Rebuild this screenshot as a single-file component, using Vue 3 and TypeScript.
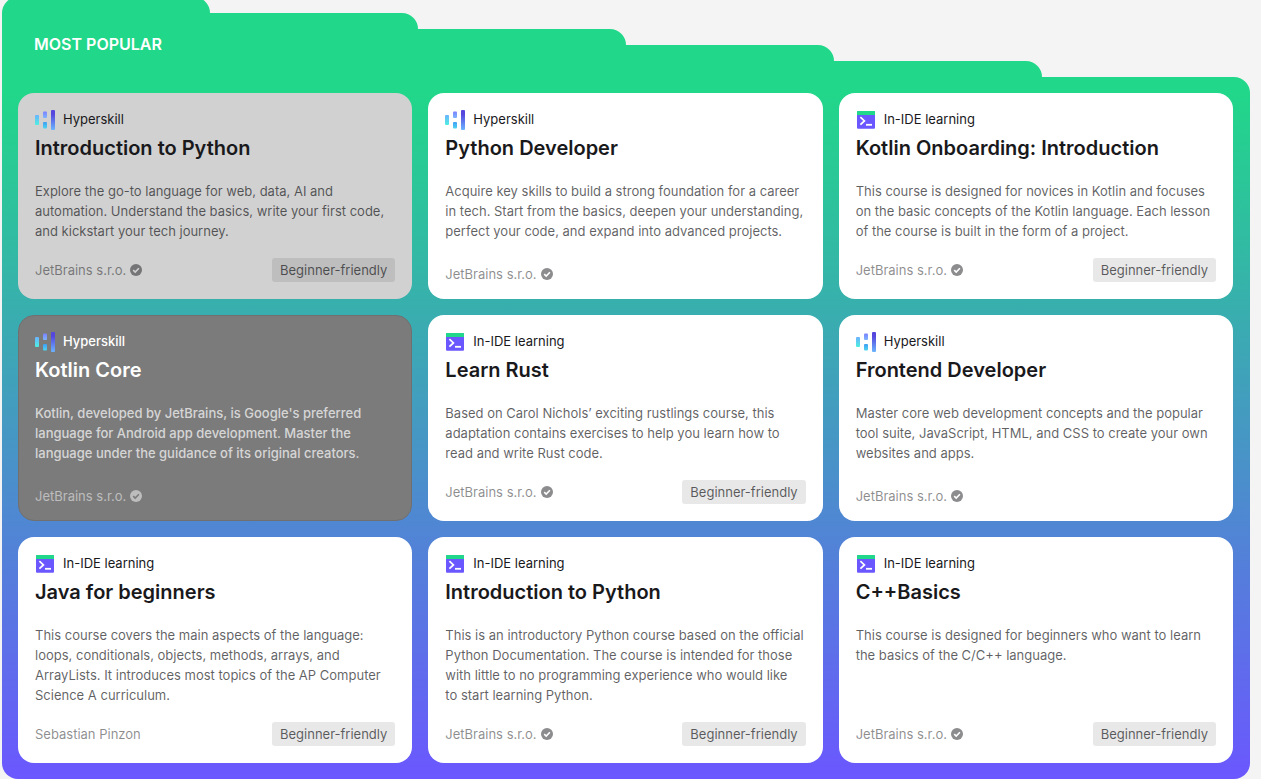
<script setup lang="ts">
type Provider = 'hyperskill' | 'ide'
type Tone = 'default' | 'hovered' | 'dark'

interface Course {
  provider: Provider
  title: string
  text: string
  author: string
  verified: boolean
  beginner: boolean
  tone: Tone
}

const providerNames: Record<Provider, string> = {
  hyperskill: 'Hyperskill',
  ide: 'In-IDE learning',
}

function course(
  provider: Provider,
  title: string,
  text: string,
  beginner: boolean,
  tone: Tone = 'default',
  author = 'JetBrains s.r.o.',
  verified = true,
): Course {
  return { provider, title, text, author, verified, beginner, tone }
}

const courses: Course[] = [
  course('hyperskill', 'Introduction to Python', 'Explore the go-to language for web, data, AI and\nautomation. Understand the basics, write your first code,\nand kickstart your tech journey.', true, 'hovered'),
  course('hyperskill', 'Python Developer', 'Acquire key skills to build a strong foundation for a career\nin tech. Start from the basics, deepen your understanding,\nperfect your code, and expand into advanced projects.', false),
  course('ide', 'Kotlin Onboarding: Introduction', 'This course is designed for novices in Kotlin and focuses\non the basic concepts of the Kotlin language. Each lesson\nof the course is built in the form of a project.', true),
  course('hyperskill', 'Kotlin Core', "Kotlin, developed by JetBrains, is Google's preferred\nlanguage for Android app development. Master the\nlanguage under the guidance of its original creators.", false, 'dark'),
  course('ide', 'Learn Rust', 'Based on Carol Nichols’ exciting rustlings course, this\nadaptation contains exercises to help you learn how to\nread and write Rust code.', true),
  course('hyperskill', 'Frontend Developer', 'Master core web development concepts and the popular\ntool suite, JavaScript, HTML, and CSS to create your own\nwebsites and apps.', false),
  course('ide', 'Java for beginners', 'This course covers the main aspects of the language:\nloops, conditionals, objects, methods, arrays, and\nArrayLists. It introduces most topics of the AP Computer\nScience A curriculum.', true, 'default', 'Sebastian Pinzon', false),
  course('ide', 'Introduction to Python', 'This is an introductory Python course based on the official\nPython Documentation. The course is intended for those\nwith little to no programming experience who would like\nto start learning Python.', true),
  course('ide', 'C++Basics', 'This course is designed for beginners who want to learn\nthe basics of the C/C++ language.', true),
]
</script>

<template>
  <svg class="defs" width="0" height="0" aria-hidden="true">
    <defs>
      <linearGradient id="bar-cyan" x1="0" y1="0" x2="0" y2="1">
        <stop offset="0" stop-color="#6bb2ff" />
        <stop offset="1" stop-color="#4df0e0" />
      </linearGradient>
      <linearGradient id="bar-periwinkle" x1="0" y1="0" x2="0" y2="1">
        <stop offset="0" stop-color="#7b82ff" />
        <stop offset="1" stop-color="#7db4ff" />
      </linearGradient>
      <linearGradient id="bar-sky" x1="0" y1="0" x2="0" y2="1">
        <stop offset="0" stop-color="#3f9df5" />
        <stop offset="1" stop-color="#4fd6f0" />
      </linearGradient>
      <linearGradient id="bar-indigo" x1="0" y1="0" x2="0" y2="1">
        <stop offset="0.2" stop-color="#5546dd" />
        <stop offset="1" stop-color="#6bb4ff" />
      </linearGradient>
    </defs>
  </svg>
  <section class="folder" aria-labelledby="folder-title">
    <header class="steps">
      <span v-for="n in 6" :key="n" class="step" />
      <h2 id="folder-title" class="folder-title">MOST POPULAR</h2>
    </header>
    <div class="cards">
      <a v-for="(c, i) in courses" :key="i" href="#" class="card" :class="c.tone">
        <div class="provider">
          <svg v-if="c.provider === 'hyperskill'" class="logo" viewBox="0 0 20 20" aria-hidden="true">
            <rect x="0" y="5" width="4" height="10" rx="1" fill="url(#bar-cyan)" />
            <rect x="8" y="1.5" width="4" height="6.5" rx="1" fill="url(#bar-periwinkle)" />
            <rect x="8" y="12" width="4" height="6.5" rx="1" fill="url(#bar-sky)" />
            <rect x="16" y="0" width="4" height="20" rx="1" fill="url(#bar-indigo)" />
          </svg>
          <svg v-else class="logo" viewBox="0 0 20 20" aria-hidden="true">
            <rect x="1" y="1" width="18" height="17.7" rx="1" fill="#6b57ff" />
            <path d="M2 1h16a1 1 0 0 1 1 1v2.9H1V2a1 1 0 0 1 1-1z" fill="#21d789" />
            <path d="M4.4 7.2 8.4 10.9 4.4 14.6" fill="none" stroke="#fff" stroke-width="1.7" />
            <path d="M10 14.8h6" stroke="#fff" stroke-width="1.8" />
          </svg>
          <span>{{ providerNames[c.provider] }}</span>
        </div>
        <h3 class="title">{{ c.title }}</h3>
        <p class="text">{{ c.text }}</p>
        <div class="footer">
          <span class="author">
            {{ c.author }}
            <svg v-if="c.verified" class="check" viewBox="0 0 12 12" role="img" aria-label="Verified">
              <circle cx="6" cy="6" r="6" />
              <path d="M3.2 6.2 5.2 8.1 8.9 4.3" />
            </svg>
          </span>
          <span v-if="c.beginner" class="badge">Beginner-friendly</span>
        </div>
      </a>
    </div>
  </section>
</template>

<style>
body {
  background: #f4f4f4;
}
</style>

<style scoped>
.defs {
  position: absolute;
}

.folder {
  margin: -3px 11px 0 2px;
  font-family: Inter, "Liberation Sans", sans-serif;
  font-size: 13px;
  line-height: 20px;
}

.steps {
  position: relative;
  display: flex;
  height: 96px;
}

.step {
  flex: 1;
  background: #21d789;
  border-top-right-radius: 16px;
}

.step:nth-child(1) { border-top-left-radius: 16px; }
.step:nth-child(2) { margin-top: 16px; }
.step:nth-child(3) { margin-top: 32px; }
.step:nth-child(4) { margin-top: 48px; }
.step:nth-child(5) { margin-top: 64px; }
.step:nth-child(6) { margin-top: 80px; }

.folder-title {
  position: absolute;
  top: 35px;
  left: 32px;
  margin: 0;
  color: #fff;
  font-size: 16px;
  font-weight: 600;
  line-height: 24px;
}

.cards {
  display: grid;
  grid-template-columns: repeat(3, minmax(0, 1fr));
  gap: 16px;
  padding: 0 17px 16px 16px;
  background: linear-gradient(#21d789, #6b57ff);
  border-radius: 0 0 16px 16px;
}

.card {
  --ink: 25, 25, 28;
  display: flex;
  flex-direction: column;
  padding: 16px;
  border: 1px solid transparent;
  border-radius: 16px;
  background: #fff;
  color: rgb(var(--ink));
  text-decoration: none;
}

.hovered {
  background: #d1d1d1;
}

.dark {
  --ink: 255, 255, 255;
  border-color: #707070;
  background: #7b7b7b;
  font-weight: 500;
}

.provider {
  display: flex;
  gap: 8px;
  line-height: 18px;
}

.logo {
  width: 20px;
  height: 20px;
}

.title {
  margin: 4px 0 19px;
  font-size: 20px;
  font-weight: 600;
  line-height: 28px;
}

.text {
  margin: 0 0 17px;
  color: rgba(var(--ink), 0.7);
  white-space: pre-line;
}

.footer {
  display: flex;
  align-items: center;
  justify-content: space-between;
  margin-top: auto;
}

.author {
  display: flex;
  align-items: center;
  gap: 4px;
  color: rgba(var(--ink), 0.5);
  line-height: 16px;
}

.dark .author {
  font-weight: 400;
}

.check {
  width: 12px;
  height: 12px;
}

.check circle {
  fill: #8c8c8e;
}

.check path {
  fill: none;
  stroke: #fff;
  stroke-width: 1.6;
}

.hovered .check circle {
  fill: #757577;
}

.hovered .check path {
  stroke: #d1d1d1;
}

.dark .check circle {
  fill: #bdbdbd;
}

.dark .check path {
  stroke: #7b7b7b;
}

.badge {
  padding: 2px 8px;
  border-radius: 3px;
  background: rgba(var(--ink), 0.1);
  color: rgba(var(--ink), 0.7);
}
</style>
